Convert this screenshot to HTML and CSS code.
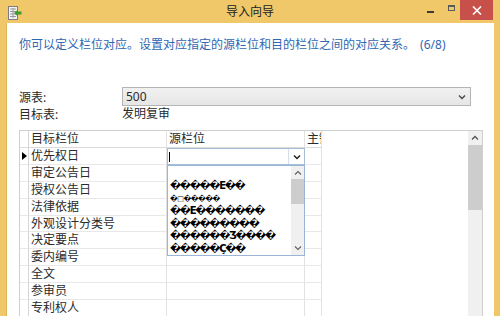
FILE: index.html
```html
<!DOCTYPE html>
<html lang="zh">
<head>
  <meta charset="UTF-8">
  <title>导入向导</title>
  <link rel="stylesheet" href="styles.css">
</head>
<body>
  <div class="window">
    <div class="titlebar">
      <div class="tb-left">
        <svg class="app-icon" width="14" height="14" viewBox="0 0 14 14">
          <rect x="0.5" y="0.5" width="9" height="13" fill="#f4f4f4" stroke="#7d7d7d"/>
          <path d="M2 3h6M2 5.5h6M2 8h6M2 10.5h6" stroke="#9a9a9a" stroke-width="1"/>
          <path d="M5 2v10" stroke="#9a9a9a" stroke-width="1"/>
          <path d="M6 7l4-3.5v2h3.5v3H10v2z" fill="#3c9a2e"/>
        </svg>
      </div>
      <div class="tb-title">导入向导</div>
      <div class="tb-controls">
        <span class="btn-min"><i></i></span>
        <span class="btn-max"><i></i></span>
        <span class="btn-close">
          <svg width="10" height="9" viewBox="0 0 10 9">
            <path d="M1 0.5l8 8M9 0.5l-8 8" stroke="#fff" stroke-width="1.6"/>
          </svg>
        </span>
      </div>
    </div>

    <div class="client">
      <p class="intro">你可以定义栏位对应。设置对应指定的源栏位和目的栏位之间的对应关系。 (6/8)</p>

      <div class="form">
        <div class="form-row">
          <span class="label">源表:</span>
          <div class="combo">
            <span>500</span>
            <svg width="8" height="6" viewBox="0 0 8 6"><path d="M1 1.5l3 3 3-3" fill="none" stroke="#444" stroke-width="1.3"/></svg>
          </div>
        </div>
        <div class="form-row short">
          <span class="label">目标表:</span>
          <span class="value">发明复审</span>
        </div>
      </div>

      <div class="grid-box">
        <div class="grid">
          <div class="row head">
            <div class="cell rh"></div>
            <div class="cell">目标栏位</div>
            <div class="cell">源栏位</div>
            <div class="cell">主键</div>
          </div>
          <div class="row">
            <div class="cell rh"><span class="pointer"></span></div>
            <div class="cell">优先权日</div>
            <div class="cell"></div>
            <div class="cell"></div>
          </div>
          <div class="row"><div class="cell rh"></div><div class="cell">审定公告日</div><div class="cell"></div><div class="cell"></div></div>
          <div class="row"><div class="cell rh"></div><div class="cell">授权公告日</div><div class="cell"></div><div class="cell"></div></div>
          <div class="row"><div class="cell rh"></div><div class="cell">法律依据</div><div class="cell"></div><div class="cell"></div></div>
          <div class="row"><div class="cell rh"></div><div class="cell">外观设计分类号</div><div class="cell"></div><div class="cell"></div></div>
          <div class="row"><div class="cell rh"></div><div class="cell">决定要点</div><div class="cell"></div><div class="cell"></div></div>
          <div class="row"><div class="cell rh"></div><div class="cell">委内编号</div><div class="cell"></div><div class="cell"></div></div>
          <div class="row"><div class="cell rh"></div><div class="cell">全文</div><div class="cell"></div><div class="cell"></div></div>
          <div class="row"><div class="cell rh"></div><div class="cell">参审员</div><div class="cell"></div><div class="cell"></div></div>
          <div class="row"><div class="cell rh"></div><div class="cell">专利权人</div><div class="cell"></div><div class="cell"></div></div>

          <div class="editor">
            <span class="caret"></span>
            <span class="drop-btn">
              <svg width="8" height="6" viewBox="0 0 8 6"><path d="M1 1.5l3 3 3-3" fill="none" stroke="#222" stroke-width="1.5"/></svg>
            </span>
          </div>
          <div class="droplist">
            <ul class="items">
              <li></li>
              <li>�����Ε��</li>
              <li class="small">�□�����</li>
              <li>��Ε�������</li>
              <li>���������</li>
              <li>������Ʒ����</li>
              <li>�����Ç��</li>
            </ul>
            <div class="list-scroll">
              <svg class="up" width="8" height="6" viewBox="0 0 8 6"><path d="M1 4.5l3-3 3 3" fill="none" stroke="#606060" stroke-width="1.1"/></svg>
              <div class="thumb"></div>
              <svg class="down" width="8" height="6" viewBox="0 0 8 6"><path d="M1 1.5l3 3 3-3" fill="none" stroke="#606060" stroke-width="1.1"/></svg>
            </div>
          </div>
        </div>
        <div class="vscroll">
          <svg width="8" height="6" viewBox="0 0 8 6"><path d="M1 4.5l3-3 3 3" fill="none" stroke="#555" stroke-width="1.3"/></svg>
          <div class="thumb"></div>
        </div>
      </div>
    </div>
  </div>
</body>
</html>
```

FILE: styles.css
```css
body {
  margin: 0;
  font-family: "Noto Sans", "Noto Sans CJK SC", sans-serif;
  font-size: 12px;
  color: #2a2a2a;
}

.window {
  width: 500px;
  height: 316px;
  background: #f0c86a;
  display: flex;
  flex-direction: column;
  overflow: hidden;
}

/* title bar */
.titlebar {
  height: 23px;
  flex: none;
  display: grid;
  grid-template-columns: 1fr auto 1fr;
  align-items: start;
}

.tb-left {
  padding: 6px 0 0 8px;
}

.app-icon {
  display: block;
}

.tb-title {
  line-height: 22px;
  color: #222;
  font-family: "Noto Sans CJK SC", sans-serif;
}

.tb-controls {
  display: flex;
  justify-content: flex-end;
  padding-right: 7px;
}

.btn-min {
  width: 22px;
  height: 20px;
  position: relative;
}

.btn-max {
  width: 17px;
  height: 20px;
  position: relative;
}

.btn-min i {
  position: absolute;
  left: 6px;
  top: 11px;
  width: 7px;
  height: 2px;
  background: #3a3a3a;
}

.btn-max i {
  position: absolute;
  left: 5px;
  top: 5px;
  width: 7px;
  height: 6px;
  box-sizing: border-box;
  border: 1px solid #5a5a5a;
  border-top-width: 2px;
}

.btn-close {
  width: 33px;
  height: 20px;
  background: #c8504b;
  display: flex;
  align-items: center;
  justify-content: center;
}

/* client area */
.client {
  flex: 1;
  margin: 0 6px 0 7px;
  background: #fff;
  box-shadow: -1px 0 0 #dcb55a;
  padding-left: 12px;
}

.intro {
  margin: 14px 0 0;
  line-height: 16px;
  color: #2f67b3;
  font-size: 12px;
  word-spacing: 2px;
}

.form {
  margin-top: 34px;
}

.form-row {
  display: flex;
  align-items: center;
  height: 19px;
}

.form-row.short {
  height: 16px;
}

.label {
  width: 103px;
  flex: none;
}

.combo {
  width: 349px;
  height: 19px;
  box-sizing: border-box;
  border: 1px solid #b4b4b4;
  background: linear-gradient(#f1f1f1, #e6e6e6);
  display: flex;
  align-items: center;
  justify-content: space-between;
  padding: 0 4px 0 3px;
}

.value {
  line-height: 16px;
}

/* data grid */
.grid-box {
  margin-top: 8px;
  width: 464px;
  height: 200px;
  box-sizing: border-box;
  border: 1px solid #cfcfcf;
  border-bottom: none;
  display: flex;
}

.grid {
  flex: 1;
  position: relative;
}

.row {
  display: grid;
  grid-template-columns: 9px 138px 138px 17px;
  height: 16.9px;
}

.row.head {
  height: 17px;
}

.cell {
  box-sizing: border-box;
  border-right: 1px solid #e2e2e2;
  border-bottom: 1px solid #e8e8e8;
  padding-left: 2px;
  line-height: 16px;
  white-space: nowrap;
  overflow: hidden;
}

.head .cell {
  border-bottom-color: #dadada;
}

.cell.rh {
  padding: 0;
  border-right-color: #d6d6d6;
  position: relative;
}

.pointer {
  position: absolute;
  left: 2px;
  top: 4px;
  border-left: 5px solid #000;
  border-top: 4px solid transparent;
  border-bottom: 4px solid transparent;
}

/* combo editor over the source cell */
.editor {
  position: absolute;
  left: 147px;
  top: 17px;
  width: 138px;
  height: 17px;
  box-sizing: border-box;
  border: 1px solid #a7bcd6;
  background: #fff;
}

.caret {
  position: absolute;
  left: 1px;
  top: 3px;
  width: 1px;
  height: 10px;
  background: #000;
}

.drop-btn {
  position: absolute;
  right: 0;
  top: 0;
  width: 16px;
  height: 15px;
  box-sizing: border-box;
  border-left: 1px solid #d5dfec;
  display: flex;
  align-items: center;
  justify-content: center;
}

.droplist {
  position: absolute;
  left: 147px;
  top: 34px;
  width: 138px;
  height: 91px;
  box-sizing: border-box;
  border: 1px solid #9bb5d6;
  background: #fff;
  display: flex;
}

.items {
  flex: 1;
  list-style: none;
  margin: 0;
  padding: 0 0 0 2px;
  overflow: hidden;
}

.items li {
  height: 12.6px;
  line-height: 12.6px;
  font-family: "DejaVu Sans", sans-serif;
  font-size: 10px;
  font-weight: bold;
  letter-spacing: -1.3px;
  color: #000;
  white-space: nowrap;
}

.items li:first-child {
  height: 14px;
}

.items li.small {
  font-size: 7px;
  letter-spacing: -0.5px;
}

.list-scroll {
  width: 13px;
  background: #f0f0f0;
  display: flex;
  flex-direction: column;
  align-items: center;
}

.list-scroll .up {
  margin-top: 4px;
}

.list-scroll .thumb {
  width: 13px;
  height: 25px;
  margin-top: 3px;
  background: #cdcdcd;
}

.list-scroll .down {
  margin-top: auto;
  margin-bottom: 4px;
}

.vscroll {
  width: 14px;
  background: #f0f0f0;
  display: flex;
  flex-direction: column;
  align-items: center;
  padding-top: 4px;
}

.vscroll .thumb {
  width: 14px;
  height: 65px;
  margin-top: 4px;
  background: #cdcdcd;
}
```
